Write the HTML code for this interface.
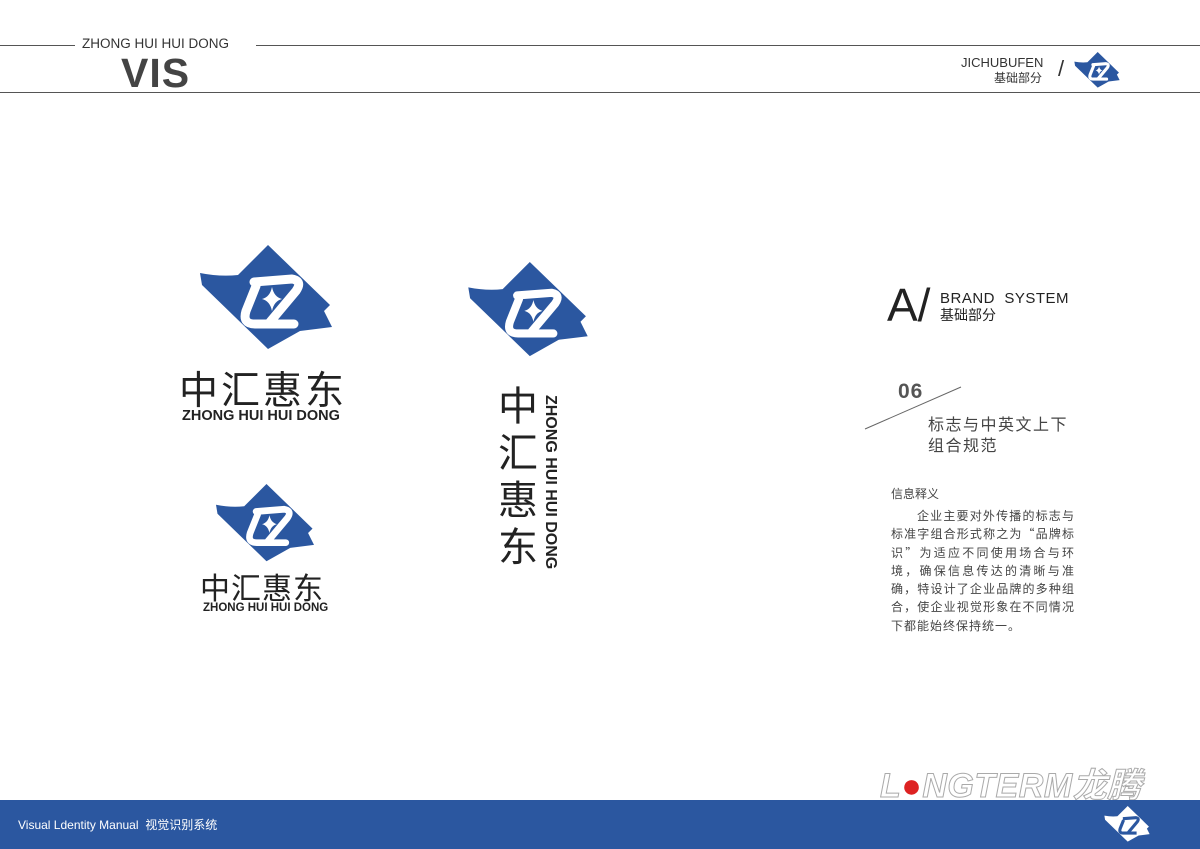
<!DOCTYPE html>
<html><head><meta charset="utf-8"><style>
body{margin:0;width:1200px;height:849px;background:#fff;position:relative;overflow:hidden;font-family:"Liberation Sans","Noto Sans CJK SC",sans-serif;color:#222}
.a{position:absolute;white-space:nowrap}
.line{position:absolute;height:1px;background:#555}
.cn{font-family:"Noto Sans CJK SC",sans-serif}
</style></head><body>
<div class="line" style="left:0;top:45px;width:75px"></div>
<div class="line" style="left:256px;top:45px;width:944px"></div>
<div class="line" style="left:0;top:92px;width:1200px"></div>
<div class="a" style="left:82px;top:36px;font-size:13.5px;color:#333">ZHONG HUI HUI DONG</div>
<div class="a" style="left:121px;top:50px;font-size:41px;font-weight:bold;color:#444;letter-spacing:1px">VIS</div>
<div class="a" style="left:961px;top:55px;font-size:13px;color:#333">JICHUBUFEN</div>
<div class="a cn" style="left:994px;top:69px;font-size:12px;color:#333">基础部分</div>
<div class="a" style="left:1058px;top:56px;font-size:22px;color:#333;font-weight:200">/</div>

<svg width="0" height="0" style="position:absolute"><defs>
<g id="lg">
<path fill="#2b57a0" d="M68,0 L130,60 L124,66 L132,82 L100,86 L68,104 L2,40 L0,28 Q20,32 38,30 Z"/>
<path fill="none" stroke="#fff" stroke-width="9" stroke-linejoin="round" stroke-linecap="round" d="M54,37 L92,34 Q103,36 96,46 L70,77"/>
<path fill="none" stroke="#fff" stroke-width="9" stroke-linejoin="round" stroke-linecap="round" d="M56,41 L46,66 Q42,79 55,79 L94,79"/>
<path fill="#fff" d="M72,42 Q74,52 82,54 Q74,56 72,66 Q70,56 62,54 Q70,52 72,42 Z"/>
</g></defs></svg>

<svg class="a" style="left:1074px;top:52px" width="46" height="36" viewBox="0 0 132 105"><use href="#lg"/></svg>
<svg class="a" style="left:200px;top:245px" width="132" height="105" viewBox="0 0 132 105"><use href="#lg"/></svg>
<svg class="a" style="left:462px;top:262px" width="132" height="95" viewBox="0 0 132 105"><use href="#lg"/></svg>
<svg class="a" style="left:216px;top:483px" width="98" height="80" viewBox="0 0 132 105"><use href="#lg"/></svg>

<div class="a cn" style="left:179px;top:364px;font-size:39px;letter-spacing:3px;color:#222;line-height:48px">中汇惠东</div>
<div class="a" style="left:182px;top:408px;font-size:14.5px;font-weight:bold;color:#222">ZHONG HUI HUI DONG</div>
<div class="a cn" style="left:200px;top:567px;font-size:30px;letter-spacing:1px;line-height:38px">中汇惠东</div>
<div class="a" style="left:203px;top:602px;font-size:11.5px;font-weight:bold">ZHONG HUI HUI DONG</div>
<div class="a cn" style="left:498px;top:380px;font-size:40px;line-height:47px;width:44px;white-space:normal">中汇惠东</div>
<div class="a" style="left:541px;top:395px;font-size:16px;font-weight:bold;transform-origin:0 0;transform:translate(18px,0) rotate(90deg)">ZHONG HUI HUI DONG</div>

<div class="a" style="left:887px;top:278px;font-size:46px;font-weight:300;color:#222">A/</div>
<div class="a" style="left:940px;top:290px;font-size:15px;letter-spacing:0.5px">BRAND&nbsp; SYSTEM</div>
<div class="a cn" style="left:940px;top:305px;font-size:14px">基础部分</div>
<div class="a" style="left:898px;top:380px;font-size:21px;font-weight:bold;color:#555;letter-spacing:1px">06</div>
<svg class="a" style="left:864px;top:386px" width="98" height="44"><line x1="1" y1="43" x2="97" y2="1" stroke="#666" stroke-width="1"/></svg>
<div class="a cn" style="left:928px;top:413px;font-size:16px;letter-spacing:1.5px;line-height:21px;color:#444">标志与中英文上下<br>组合规范</div>
<div class="a cn" style="left:891px;top:485px;font-size:12px;color:#444">信息释义</div>
<div class="a cn" style="left:891px;top:507px;width:184px;white-space:normal;font-size:12px;letter-spacing:1px;line-height:18.3px;color:#444;text-align:justify;text-indent:26px">企业主要对外传播的标志与标准字组合形式称之为“品牌标识”为适应不同使用场合与环境，确保信息传达的清晰与准确，特设计了企业品牌的多种组合，使企业视觉形象在不同情况下都能始终保持统一。</div>

<div class="a" style="left:880px;top:758px;font-size:34px;font-style:italic;font-weight:bold;color:#fff;-webkit-text-stroke:1px #aaa;letter-spacing:0.5px">L<span style="color:#d22;-webkit-text-stroke:0">●</span>NGTERM<span class="cn">龙腾</span></div>

<div class="a" style="left:0;top:800px;width:1200px;height:49px;background:#2b57a0"></div>
<div class="a" style="left:18px;top:816px;font-size:12px;color:#fff">Visual Ldentity Manual&nbsp; 视觉识别系统</div>
<svg class="a" style="left:1103px;top:806px" width="48" height="36" viewBox="0 0 132 105"><path fill="#fff" d="M68,0 L130,60 L124,66 L132,82 L100,86 L68,104 L2,40 L0,28 Q20,32 38,30 Z"/><path fill="none" stroke="#2b57a0" stroke-width="9" stroke-linejoin="round" d="M54,37 L92,34 Q103,36 96,46 L70,77 M56,41 L46,66 Q42,79 55,79 L94,79"/></svg>
</body></html>
